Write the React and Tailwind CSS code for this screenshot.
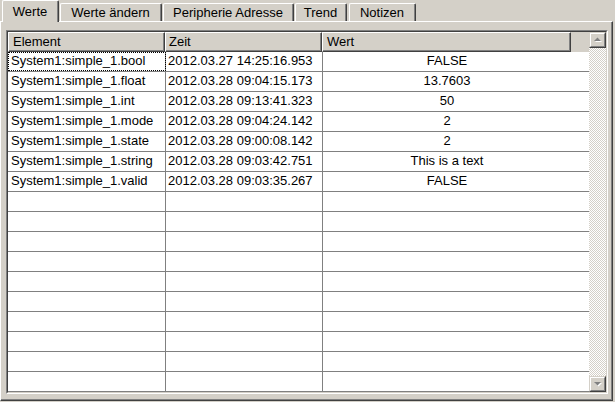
const rows = [
  ["System1:simple_1.bool", "2012.03.27 14:25:16.953", "FALSE"],
  ["System1:simple_1.float", "2012.03.28 09:04:15.173", "13.7603"],
  ["System1:simple_1.int", "2012.03.28 09:13:41.323", "50"],
  ["System1:simple_1.mode", "2012.03.28 09:04:24.142", "2"],
  ["System1:simple_1.state", "2012.03.28 09:00:08.142", "2"],
  ["System1:simple_1.string", "2012.03.28 09:03:42.751", "This is a text"],
  ["System1:simple_1.valid", "2012.03.28 09:03:35.267", "FALSE"],
];

const emptyRows = Array.from({ length: 10 });

function Tab({ label, width, active, className = "" }) {
  if (active) {
    return (
      <div
        className={`${width} ${className} relative z-10 -mb-px h-[22px] rounded-tl-[2px] rounded-tr-[2px] border-t border-l border-r border-t-white border-l-white border-r-[#404040] bg-[#D4D0C8]`}
      >
        <div className="flex h-full items-center justify-center border-r border-[#808080] pt-[1px]">
          {label}
        </div>
      </div>
    );
  }
  return (
    <div
      className={`${width} ${className} h-[18px] rounded-tl-[2px] rounded-tr-[2px] border-t border-l border-r border-t-white border-l-white border-r-[#404040]`}
    >
      <div className="flex h-full items-center justify-center border-r border-[#808080]">
        {label}
      </div>
    </div>
  );
}

function HeaderCell({ width, pad, children }) {
  return (
    <div
      className={`${width} h-[20px] border border-t-white border-l-white border-r-[#404040] border-b-[#404040]`}
    >
      <div className={`${pad} h-full border-r border-b border-[#808080] leading-[17px]`}>
        {children}
      </div>
    </div>
  );
}

function Arrow({ down }) {
  return (
    <svg width="9" height="6" viewBox="0 0 9 6">
      {down ? (
        <>
          <polygon points="2,2 9,2 5.5,5.5" fill="#ffffff" />
          <polygon points="1,1 8,1 4.5,4.5" fill="#808080" />
        </>
      ) : (
        <>
          <polygon points="2,5 9,5 5.5,1.5" fill="#ffffff" />
          <polygon points="1,4 8,4 4.5,0.5" fill="#808080" />
        </>
      )}
    </svg>
  );
}

function ScrollButton({ down }) {
  return (
    <div className="h-[16px] border border-t-[#D4D0C8] border-l-[#D4D0C8] border-r-[#404040] border-b-[#404040] bg-[#D4D0C8]">
      <div className="flex h-full items-center justify-center border border-t-white border-l-white border-r-[#808080] border-b-[#808080]">
        <Arrow down={down} />
      </div>
    </div>
  );
}

export default function App() {
  return (
    <div
      className="h-[402px] w-[615px] overflow-hidden bg-[#D4D0C8] text-[13px] text-black"
      style={{ fontFamily: '"Liberation Sans", Arial, sans-serif' }}
    >
      {/* tabs */}
      <div className="flex h-[21px] items-end pl-[2px]">
        <Tab label="Werte" width="w-[57px]" active />
        <Tab label="Werte ändern" width="w-[102px]" className="ml-[1px]" />
        <Tab label="Peripherie Adresse" width="w-[131px]" className="ml-[1px]" />
        <Tab label="Trend" width="w-[52px]" className="ml-[1px]" />
        <Tab label="Notizen" width="w-[67px]" className="ml-[2px]" />
      </div>

      {/* panel */}
      <div className="h-[380px] w-[613px] border border-t-white border-l-white border-r-[#404040] border-b-[#404040]">
        <div className="h-full border-r border-b border-[#808080] pt-[8px] pr-[3px] pb-[5px] pl-[5px]">
          {/* grid */}
          <div className="h-[364px] w-[602px] border border-t-[#808080] border-l-[#808080] border-r-white border-b-white">
            <div className="flex h-full border border-t-[#404040] border-l-[#404040] border-r-[#D4D0C8] border-b-[#D4D0C8]">
              <div className="flex w-[581px] flex-col">
                <div className="flex">
                  <HeaderCell width="w-[157px]" pad="pl-[4px]">Element</HeaderCell>
                  <HeaderCell width="w-[157px]" pad="pl-[3px]">Zeit</HeaderCell>
                  <HeaderCell width="w-[249px]" pad="pl-[4px]">Wert</HeaderCell>
                  <div className="flex-1" />
                </div>
                <div className="flex-1 bg-white">
                  {rows.map((r, i) => (
                    <div key={r[0]} className="flex h-[20px] border-b border-[#808080] leading-[18px]">
                      <div
                        className={`w-[158px] border-r border-[#808080] pl-[3px] whitespace-nowrap ${
                          i === 0 ? "outline-1 -outline-offset-1 outline-dotted outline-black" : ""
                        }`}
                      >
                        {r[0]}
                      </div>
                      <div className="w-[157px] border-r border-[#808080] pl-[2px] whitespace-nowrap">
                        {r[1]}
                      </div>
                      <div className="w-[248px] text-center whitespace-nowrap">{r[2]}</div>
                      <div className="flex-1" />
                    </div>
                  ))}
                  {emptyRows.map((_, i) => (
                    <div key={i} className="flex h-[20px] border-b border-[#808080]">
                      <div className="w-[158px] border-r border-[#808080]" />
                      <div className="w-[157px] border-r border-[#808080]" />
                      <div className="flex-1" />
                    </div>
                  ))}
                </div>
              </div>

              {/* scrollbar */}
              <div className="flex w-[17px] flex-col">
                <ScrollButton />
                <div className="flex-1 bg-[image:repeating-conic-gradient(#d4d0c8_0%_25%,#ffffff_0%_50%)] bg-size-[2px_2px]" />
                <ScrollButton down />
              </div>
            </div>
          </div>
        </div>
      </div>
    </div>
  );
}
